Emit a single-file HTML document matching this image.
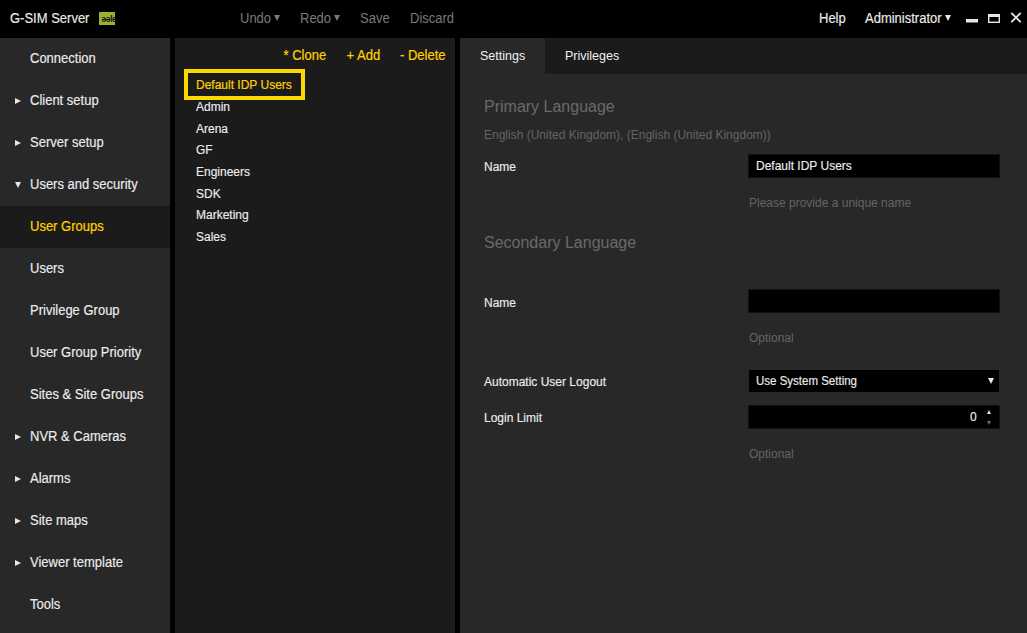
<!DOCTYPE html>
<html><head><meta charset="utf-8">
<style>
*{margin:0;padding:0;box-sizing:border-box}
html,body{width:1027px;height:633px;overflow:hidden;background:#000}
body{position:relative;font-family:"Liberation Sans",sans-serif;font-size:13px;color:#e6e6e6}
.a{position:absolute}
.t{position:absolute;white-space:nowrap;line-height:1}
.s13{font-size:13px;transform:scaleY(1.08);transform-origin:0 11px}
.s12{font-size:12px;transform:scaleY(1.06);transform-origin:0 10px}
.s16{font-size:16px}
#top{left:0;top:0;width:1027px;height:38px;background:#000}
#side{left:0;top:38px;width:170px;height:595px;background:#282828}
#list{left:175px;top:38px;width:280px;height:595px;background:#1b1b1b}
#main{left:460px;top:38px;width:567px;height:595px;background:#282828}
#tabbar{left:460px;top:38px;width:567px;height:36px;background:#1b1b1b}
#tab1{left:460px;top:38px;width:85px;height:36px;background:#282828}
.gray{color:#7a7a7a}
.yel{color:#ffd000;-webkit-text-stroke:0.2px #ffd000}
.wh{color:#ececec;-webkit-text-stroke:0.15px #ececec}
.hint{color:#646464}
.head{color:#6a6a6a}
.inp{position:absolute;background:#000;border:1px solid #121212}
.tri-r{position:absolute;width:0;height:0;border-top:3px solid transparent;border-bottom:3px solid transparent;border-left:6px solid #e8e8e8}
.tri-d{position:absolute;width:0;height:0;border-left:3px solid transparent;border-right:3px solid transparent;border-top:6px solid #e8e8e8}
</style></head>
<body>
<div id="top" class="a"></div>
<div id="side" class="a"></div>
<div id="list" class="a"></div>
<div id="main" class="a"></div>
<div id="tabbar" class="a"></div>
<div id="tab1" class="a"></div>

<!-- top bar -->
<div class="t s13 wh" style="left:10px;top:12px">G-SIM Server</div>
<div class="a" style="left:99px;top:12px;width:16px;height:13px;background:#98b232;overflow:hidden">
  <div class="t" style="left:2.5px;top:3px;font-size:8.5px;font-weight:bold;color:#111;letter-spacing:-0.4px;transform:scaleY(1.15)">əəle</div>
</div>
<div class="t s13 gray" style="left:240px;top:12px">Undo</div>
<div class="tri-d" style="left:274px;top:15px;border-top-color:#7a7a7a"></div>
<div class="t s13 gray" style="left:300px;top:12px">Redo</div>
<div class="tri-d" style="left:334px;top:15px;border-top-color:#7a7a7a"></div>
<div class="t s13 gray" style="left:360px;top:12px">Save</div>
<div class="t s13 gray" style="left:410px;top:12px">Discard</div>
<div class="t s13 wh" style="left:819px;top:12px">Help</div>
<div class="t s13 wh" style="left:865px;top:12px">Administrator</div>
<div class="tri-d" style="left:945px;top:15px;border-top-color:#e8e8e8"></div>
<svg class="a" style="left:960px;top:8px" width="67" height="22" viewBox="960 8 67 22">
  <rect x="966" y="19" width="12" height="3.5" fill="#e6e6e6"/>
  <rect x="988.7" y="14.7" width="10.6" height="7.6" fill="none" stroke="#e6e6e6" stroke-width="1.4"/>
  <rect x="988" y="14" width="12" height="3" fill="#e6e6e6"/>
  <path d="M1011.3 12.8 L1020.7 22.2 M1020.7 12.8 L1011.3 22.2" stroke="#e6e6e6" stroke-width="1.9"/>
</svg>

<!-- sidebar -->
<div id="sideitems"></div>
<div class="t s13 wh" style="left:30px;top:52px">Connection</div>
<div class="tri-r" style="left:15px;top:98px"></div>
<div class="t s13 wh" style="left:30px;top:94px">Client setup</div>
<div class="tri-r" style="left:15px;top:140px"></div>
<div class="t s13 wh" style="left:30px;top:136px">Server setup</div>
<div class="tri-d" style="left:15px;top:182px"></div>
<div class="t s13 wh" style="left:30px;top:178px">Users and security</div>
<div class="a" style="left:0;top:206px;width:170px;height:42px;background:#1b1b1b"></div>
<div class="t s13 yel" style="left:30px;top:220px">User Groups</div>
<div class="t s13 wh" style="left:30px;top:262px">Users</div>
<div class="t s13 wh" style="left:30px;top:304px">Privilege Group</div>
<div class="t s13 wh" style="left:30px;top:346px">User Group Priority</div>
<div class="t s13 wh" style="left:30px;top:388px">Sites &amp; Site Groups</div>
<div class="tri-r" style="left:15px;top:434px"></div>
<div class="t s13 wh" style="left:30px;top:430px">NVR &amp; Cameras</div>
<div class="tri-r" style="left:15px;top:476px"></div>
<div class="t s13 wh" style="left:30px;top:472px">Alarms</div>
<div class="tri-r" style="left:15px;top:518px"></div>
<div class="t s13 wh" style="left:30px;top:514px">Site maps</div>
<div class="tri-r" style="left:15px;top:560px"></div>
<div class="t s13 wh" style="left:30px;top:556px">Viewer template</div>
<div class="t s13 wh" style="left:30px;top:598px">Tools</div>

<!-- list -->
<div class="t s13 yel" style="left:283.5px;top:49px">* Clone</div>
<div class="t s13 yel" style="left:346.5px;top:49px">+ Add</div>
<div class="t s13 yel" style="left:400px;top:49px">- Delete</div>
<div class="a" style="left:184px;top:69px;width:121px;height:31px;border:4px solid #ffd800"></div>
<div class="t s12 yel" style="left:196px;top:79px">Default IDP Users</div>
<div class="t s12 wh" style="left:196px;top:101px">Admin</div>
<div class="t s12 wh" style="left:196px;top:123px">Arena</div>
<div class="t s12 wh" style="left:196px;top:144px">GF</div>
<div class="t s12 wh" style="left:196px;top:166px">Engineers</div>
<div class="t s12 wh" style="left:196px;top:188px">SDK</div>
<div class="t s12 wh" style="left:196px;top:209px">Marketing</div>
<div class="t s12 wh" style="left:196px;top:231px">Sales</div>

<!-- main -->
<div class="t" style="left:480px;top:50px;font-size:12.5px;color:#f2f2f2;transform:scaleY(1.08);transform-origin:0 10.5px">Settings</div>
<div class="t" style="left:565px;top:50px;font-size:12.5px;color:#f2f2f2;transform:scaleY(1.08);transform-origin:0 10.5px">Privileges</div>

<div class="t s16 head" style="left:484px;top:99px">Primary Language</div>
<div class="t s12 hint" style="left:484px;top:129px">English (United Kingdom), (English (United Kingdom))</div>
<div class="t s12 wh" style="left:484px;top:161px">Name</div>
<div class="inp" style="left:748px;top:154px;width:252px;height:24px"></div>
<div class="t s12 wh" style="left:756px;top:160px">Default IDP Users</div>
<div class="t s12 hint" style="left:749px;top:197px">Please provide a unique name</div>

<div class="t s16 head" style="left:484px;top:235px">Secondary Language</div>
<div class="t s12 wh" style="left:484px;top:297px">Name</div>
<div class="inp" style="left:748px;top:289px;width:252px;height:24px"></div>
<div class="t s12 hint" style="left:749px;top:332px">Optional</div>

<div class="t s12 wh" style="left:484px;top:376px">Automatic User Logout</div>
<div class="a" style="left:749px;top:370px;width:250px;height:22px;background:#000"></div>
<div class="t s12 wh" style="left:756px;top:376px;font-size:11.5px">Use System Setting</div>
<div class="tri-d" style="left:988px;top:378px;border-top-color:#e8e8e8"></div>

<div class="t s12 wh" style="left:484px;top:412px">Login Limit</div>
<div class="inp" style="left:748px;top:405px;width:252px;height:24px"></div>
<div class="t s12 wh" style="left:970px;top:411px">0</div>
<div class="a" style="left:986.5px;top:410px;width:0;height:0;border-left:2.6px solid transparent;border-right:2.6px solid transparent;border-bottom:4.5px solid #e0e0e0"></div>
<div class="a" style="left:986.5px;top:420.5px;width:0;height:0;border-left:2.6px solid transparent;border-right:2.6px solid transparent;border-top:4.5px solid #6a6a6a"></div>
<div class="t s12 hint" style="left:749px;top:448px">Optional</div>

</body></html>
